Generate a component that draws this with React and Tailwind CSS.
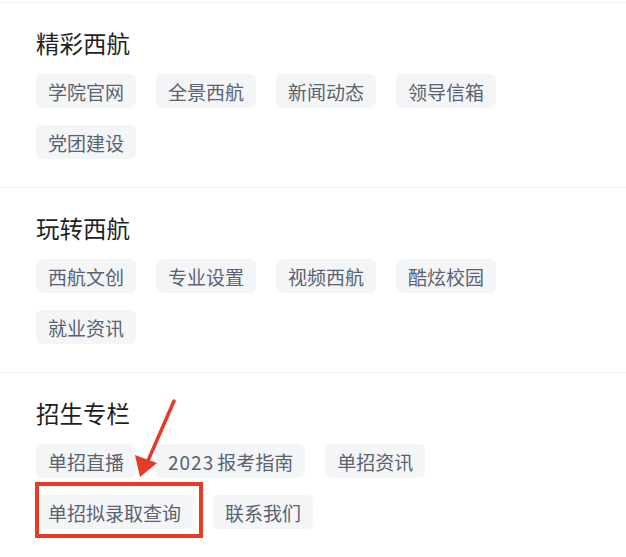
const sections = [
  { title: '精彩西航', items: ['学院官网', '全景西航', '新闻动态', '领导信箱', '党团建设'] },
  { title: '玩转西航', items: ['西航文创', '专业设置', '视频西航', '酷炫校园', '就业资讯'] },
  { title: '招生专栏', items: ['单招直播', '2023报考指南', '单招资讯', '单招拟录取查询', '联系我们'] },
];

function Chip({ label, marked }) {
  const year = label.match(/^\d+/);
  return (
    <div className="relative h-[34px] px-3 flex items-center rounded-md bg-[#f4f5f7] text-[19px] leading-none text-[#5b6270]">
      {year ? (
        <>
          <span className="tracking-[1px] mr-[3px]">{year[0]}</span>
          {label.slice(year[0].length)}
        </>
      ) : (
        label
      )}
      {marked && (
        <div className="absolute -left-px -top-[13px] w-[168px] h-[56px] border-4 border-[#e63b26]" />
      )}
    </div>
  );
}

export default function App() {
  return (
    <div
      className="w-[626px] h-[557px] bg-white overflow-hidden pt-[2px]"
      style={{ fontFamily: '"Noto Sans CJK SC", "Noto Sans", sans-serif' }}
    >
      {sections.map((s, i) => (
        <section key={s.title} className="relative h-[185px] border-t border-[#eeeeee] pl-9 pt-[25px]">
          <h2 className="text-[23.5px] leading-[30px] text-[#1f1f1f]">{s.title}</h2>
          <div className="mt-4 flex flex-wrap gap-x-5 gap-y-[17px] w-[480px]">
            {s.items.map((it) => (
              <Chip key={it} label={it} marked={it === '单招拟录取查询'} />
            ))}
          </div>

          {/* annotation arrow */}
          {i === 2 && (
            <svg className="absolute left-0 top-0" width="626" height="185">
              <line x1="174" y1="28" x2="147" y2="90" stroke="#e63b26" strokeWidth="3.5" strokeLinecap="round" />
              <polygon points="140,104 135,82 157,90" fill="#e63b26" />
            </svg>
          )}
        </section>
      ))}
    </div>
  );
}
